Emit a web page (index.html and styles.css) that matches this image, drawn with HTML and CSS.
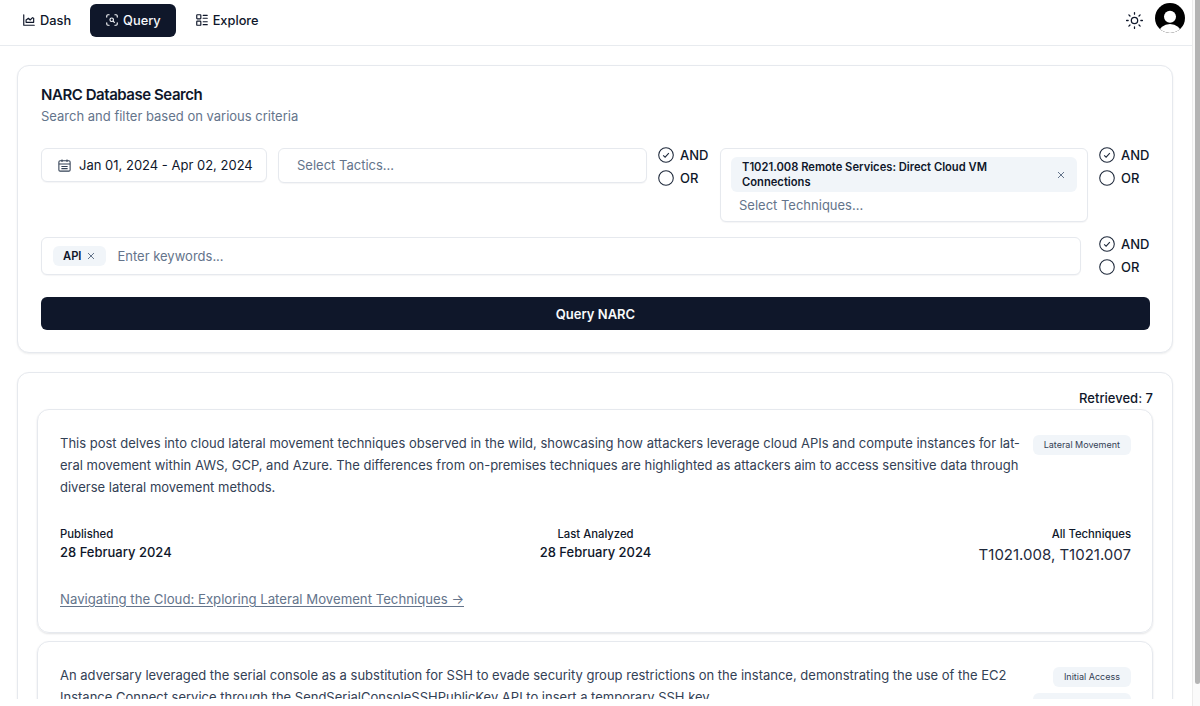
FILE: index.html
```html
<!DOCTYPE html>
<html lang="en">
<head>
    <meta charset="UTF-8">
    <title>NARC Database Search</title>
    <link rel="stylesheet" href="styles.css">
</head>
<body>
<div class="page">
    <div class="main">
        <nav class="topbar">
            <a class="navItem">
                <svg class="navIcon" viewBox="0 0 24 24"><path d="M3 3v18h18"/><path d="M7 16v-4l4-3 3 3 4-4 2 1v7z"/></svg>
                Dash
            </a>
            <a class="navItem active">
                <svg class="navIcon" viewBox="0 0 24 24"><path d="M3 7V5a2 2 0 0 1 2-2h2M17 3h2a2 2 0 0 1 2 2v2M21 17v2a2 2 0 0 1-2 2h-2M7 21H5a2 2 0 0 1-2-2v-2"/><circle cx="11.5" cy="11.5" r="3"/><path d="M14 14l2 2"/></svg>
                Query
            </a>
            <a class="navItem">
                <svg class="navIcon" viewBox="0 0 24 24"><rect x="3" y="3" width="7" height="7" rx="1"/><rect x="3" y="14" width="7" height="7" rx="1"/><path d="M14 4h7M14 9h7M14 15h7M14 20h7"/></svg>
                Explore
            </a>
            <div class="topRight">
                <svg class="sun" viewBox="0 0 24 24"><circle cx="12" cy="12" r="4"/><path d="M12 2v2M12 20v2M4.9 4.9l1.4 1.4M17.7 17.7l1.4 1.4M2 12h2M20 12h2M4.9 19.1l1.4-1.4M17.7 6.3l1.4-1.4"/></svg>
                <svg class="avatar" viewBox="0 0 30 30"><defs><clipPath id="avatarClip"><circle cx="15" cy="15" r="15"/></clipPath></defs><g clip-path="url(#avatarClip)"><rect width="30" height="30" fill="#000"/><circle cx="15" cy="13.7" r="6" fill="#fff"/><ellipse cx="15" cy="30" rx="11.2" ry="9" fill="#fff"/></g></svg>
            </div>
        </nav>

        <div class="content">
            <section class="card searchCard">
                <h1>NARC Database Search</h1>
                <p class="subtitle">Search and filter based on various criteria</p>

                <div class="filterRow firstRow">
                    <div class="box dateBox">
                        <svg class="calIcon" viewBox="0 0 24 24"><rect x="3" y="4.5" width="18" height="16.5" rx="2"/><path d="M8 2.5v4M16 2.5v4M3 9.5h18M7 13.5h10M7 17h10"/></svg>
                        Jan 01, 2024 - Apr 02, 2024
                    </div>
                    <div class="box tacticsBox">Select Tactics...</div>
                    <div class="logic">
                        <div class="logicRow"><svg class="radio" viewBox="0 0 18 18"><circle cx="9" cy="9" r="8.2"/><path d="M5.8 9.3l2.2 2.2 4.2-4.6"/></svg>AND</div>
                        <div class="logicRow"><svg class="radio" viewBox="0 0 18 18"><circle cx="9" cy="9" r="8.2"/></svg>OR</div>
                    </div>
                    <div class="box techBox">
                        <div class="techTag">
                            <span>T1021.008 Remote Services: Direct Cloud VM Connections</span>
                            <svg class="xIcon" viewBox="0 0 10 10"><path d="M2 2l6 6M8 2l-6 6"/></svg>
                        </div>
                        <div class="techPlaceholder">Select Techniques...</div>
                    </div>
                    <div class="logic">
                        <div class="logicRow"><svg class="radio" viewBox="0 0 18 18"><circle cx="9" cy="9" r="8.2"/><path d="M5.8 9.3l2.2 2.2 4.2-4.6"/></svg>AND</div>
                        <div class="logicRow"><svg class="radio" viewBox="0 0 18 18"><circle cx="9" cy="9" r="8.2"/></svg>OR</div>
                    </div>
                </div>

                <div class="filterRow keywordRow">
                    <div class="box keywordBox">
                        <span class="apiTag">API <svg class="xIcon" viewBox="0 0 10 10"><path d="M2 2l6 6M8 2l-6 6"/></svg></span>
                        <span class="placeholder">Enter keywords...</span>
                    </div>
                    <div class="logic">
                        <div class="logicRow"><svg class="radio" viewBox="0 0 18 18"><circle cx="9" cy="9" r="8.2"/><path d="M5.8 9.3l2.2 2.2 4.2-4.6"/></svg>AND</div>
                        <div class="logicRow"><svg class="radio" viewBox="0 0 18 18"><circle cx="9" cy="9" r="8.2"/></svg>OR</div>
                    </div>
                </div>

                <button class="queryBtn">Query NARC</button>
            </section>

            <section class="card resultsCard">
                <div class="retrieved">Retrieved: 7</div>

                <article class="result">
                    <div class="resultTop">
                        <p class="summary">This post delves into cloud lateral movement techniques observed in the wild, showcasing how attackers leverage cloud APIs and compute instances for lat&shy;eral movement within AWS, GCP, and Azure. The differences from on-premises techniques are highlighted as attackers aim to access sensitive data through diverse lateral movement methods.</p>
                        <div class="tags"><span class="tag">Lateral Movement</span></div>
                    </div>
                    <div class="meta">
                        <div class="metaCol">
                            <div class="metaLabel">Published</div>
                            <div class="metaValue">28 February 2024</div>
                        </div>
                        <div class="metaCol center">
                            <div class="metaLabel">Last Analyzed</div>
                            <div class="metaValue">28 February 2024</div>
                        </div>
                        <div class="metaCol right">
                            <div class="metaLabel">All Techniques</div>
                            <div class="metaTech">T1021.008, T1021.007</div>
                        </div>
                    </div>
                    <a class="resultLink">Navigating the Cloud: Exploring Lateral Movement Techniques →</a>
                </article>

                <article class="result">
                    <div class="resultTop">
                        <p class="summary">An adversary leveraged the serial console as a substitution for SSH to evade security group restrictions on the instance, demonstrating the use of the EC2 Instance Connect service through the SendSerialConsoleSSHPublicKey API to insert a temporary SSH key.</p>
                        <div class="tags"><span class="tag">Initial Access</span><span class="tag">Lateral Movement</span></div>
                    </div>
                </article>
            </section>
        </div>
        <div class="bottomFade"></div>
    </div>
    <div class="scrollRail"><div class="scrollThumb"></div></div>
</div>
</body>
</html>
```

FILE: styles.css
```css
* {
    box-sizing: border-box;
}
html, body {
    margin: 0;
    height: 706px;
    overflow: hidden;
}
body {
    font-family: Inter, "Liberation Sans", sans-serif;
    color: #0f172a;
    background-color: #ffffff;
    font-size: 13px;
}
.page {
    display: flex;
    height: 706px;
}
.main {
    flex: 1;
    min-width: 0;
    position: relative;
    overflow: hidden;
}

/* top navigation */
.topbar {
    display: flex;
    align-items: center;
    height: 46px;
    padding: 0 7px 5px 7px;
    border-bottom: 1px solid #e8ebef;
}
.navItem {
    display: flex;
    align-items: center;
    gap: 4px;
    height: 33px;
    padding: 0 15px;
    margin-right: 4px;
    border-radius: 6px;
    font-size: 12.8px;
    font-weight: 500;
    color: #0f172a;
}
.navItem.active {
    background-color: #0f172a;
    color: #f8fafc;
}
.navIcon {
    width: 14px;
    height: 14px;
    fill: none;
    stroke: currentColor;
    stroke-width: 2;
    stroke-linecap: round;
    stroke-linejoin: round;
}
.topRight {
    margin-left: auto;
    display: flex;
    align-items: center;
    gap: 11px;
}
.sun {
    width: 19px;
    height: 19px;
    fill: none;
    stroke: #0f172a;
    stroke-width: 1.6;
    stroke-linecap: round;
}
.avatar {
    width: 30px;
    height: 30px;
    margin-bottom: 4px;
}

/* cards */
.content {
    padding: 19px 19px 0 17px;
}
.card {
    border: 1px solid #e6e9ee;
    border-radius: 12px;
    background-color: #ffffff;
    box-shadow: 0 1px 2px rgba(15, 23, 42, 0.08);
}
.searchCard {
    height: 288px;
    padding: 20px 22px 0 23px;
}
h1 {
    margin: 0;
    font-size: 15px;
    line-height: 18px;
    font-weight: 600;
    letter-spacing: -0.45px;
}
.subtitle {
    margin: 2px 0 0;
    font-size: 13px;
    line-height: 20px;
    color: #64748b;
}
.filterRow {
    display: flex;
    align-items: flex-start;
}
.firstRow {
    margin-top: 22px;
    gap: 11px;
}
.box {
    flex: none;
    border: 1px solid #e6e9ee;
    border-radius: 6px;
    background-color: #ffffff;
    box-shadow: 0 1px 1px rgba(15, 23, 42, 0.04);
}
.dateBox {
    display: flex;
    align-items: center;
    gap: 7px;
    width: 226px;
    height: 34px;
    padding: 0 15px;
    white-space: nowrap;
}
.calIcon {
    width: 15px;
    height: 15px;
    flex: none;
    fill: none;
    stroke: #334155;
    stroke-width: 1.7;
}
.tacticsBox {
    width: 369px;
    height: 35px;
    padding: 0 18px;
    line-height: 33px;
    color: #64748b;
}
.logic {
    width: 51px;
    flex: none;
    margin-top: -4px;
}
.logicRow {
    display: flex;
    align-items: center;
    gap: 6px;
    height: 22.5px;
    font-size: 13px;
    font-weight: 500;
}
.radio {
    width: 16px;
    height: 16px;
    flex: none;
    fill: none;
    stroke: #1e293b;
    stroke-width: 1.2;
}
.techBox {
    width: 368px;
    height: 74px;
    padding: 8px 10px 0;
}
.techTag {
    display: flex;
    align-items: center;
    justify-content: space-between;
    height: 35px;
    padding: 0 11px;
    border-radius: 6px;
    background-color: #f1f5f9;
    font-size: 11.2px;
    line-height: 15px;
    font-weight: 600;
}
.techTag span {
    width: 270px;
}
.xIcon {
    width: 10px;
    height: 10px;
    fill: none;
    stroke: #64748b;
    stroke-width: 1;
}
.techPlaceholder {
    padding-left: 8px;
    margin-top: 3px;
    line-height: 20px;
    color: #64748b;
}
.keywordRow {
    margin-top: 15px;
}
.keywordBox {
    display: flex;
    align-items: center;
    width: 1040px;
    height: 38px;
    padding: 0 11px;
    margin-right: 18px;
}
.apiTag {
    display: flex;
    align-items: center;
    gap: 5px;
    height: 20px;
    padding: 0 10px;
    border-radius: 6px;
    background-color: #f1f5f9;
    font-size: 11.2px;
    font-weight: 600;
}
.placeholder {
    margin-left: 11px;
    color: #64748b;
}
.queryBtn {
    display: block;
    width: 100%;
    height: 33px;
    margin-top: 19px;
    border: none;
    border-radius: 6px;
    background-color: #0f172a;
    color: #f8fafc;
    font-family: inherit;
    font-size: 13px;
    font-weight: 600;
}

/* results */
.resultsCard {
    margin-top: 19px;
    padding: 17px 19px 20px;
}
.retrieved {
    text-align: right;
    font-size: 13px;
    line-height: 17px;
    font-weight: 500;
}
.result {
    border: 1px solid #e6e9ee;
    border-radius: 12px;
    padding: 22px 21px 0 22px;
    margin-top: 2px;
    height: 224px;
    box-shadow: 0 1px 2px rgba(15, 23, 42, 0.12);
}
.result + .result {
    margin-top: 8px;
}
.resultTop {
    display: flex;
    justify-content: space-between;
}
.summary {
    width: 962px;
    margin: 0;
    font-size: 13px;
    line-height: 22px;
    color: #334155;
    hyphens: manual;
}
.tags {
    display: flex;
    flex-direction: column;
    align-items: flex-end;
    gap: 6px;
    flex: none;
    padding-top: 3px;
}
.tag {
    display: block;
    height: 20px;
    padding: 0 11px;
    border-radius: 6px;
    background-color: #f1f5f9;
    font-size: 9px;
    line-height: 20px;
    color: #334155;
    white-space: nowrap;
}
.meta {
    display: grid;
    grid-template-columns: 1fr 1fr 1fr;
    margin-top: 28px;
}
.metaLabel {
    font-size: 11.3px;
    line-height: 16px;
    font-weight: 500;
}
.metaValue {
    font-size: 13px;
    line-height: 20px;
    font-weight: 500;
}
.metaTech {
    margin-top: 2px;
    font-size: 15px;
    line-height: 22px;
    color: #1e293b;
}
.center {
    text-align: center;
}
.right {
    text-align: right;
}
.resultLink {
    display: block;
    margin-top: 23px;
    font-size: 13.2px;
    line-height: 20px;
    color: #64748b;
    text-decoration: underline;
    text-underline-offset: 2px;
}
.bottomFade {
    position: absolute;
    left: 0;
    right: 0;
    bottom: 0;
    height: 7px;
    background-color: #ffffff;
}

/* scrollbar */
.scrollRail {
    width: 8px;
    flex: none;
    padding-left: 2px;
    background-color: #fafafa;
    border-left: 1px solid #ececec;
}
.scrollThumb {
    width: 5px;
    height: 684px;
    border-radius: 0 0 3px 3px;
    background-color: #b4b4b4;
}
```
